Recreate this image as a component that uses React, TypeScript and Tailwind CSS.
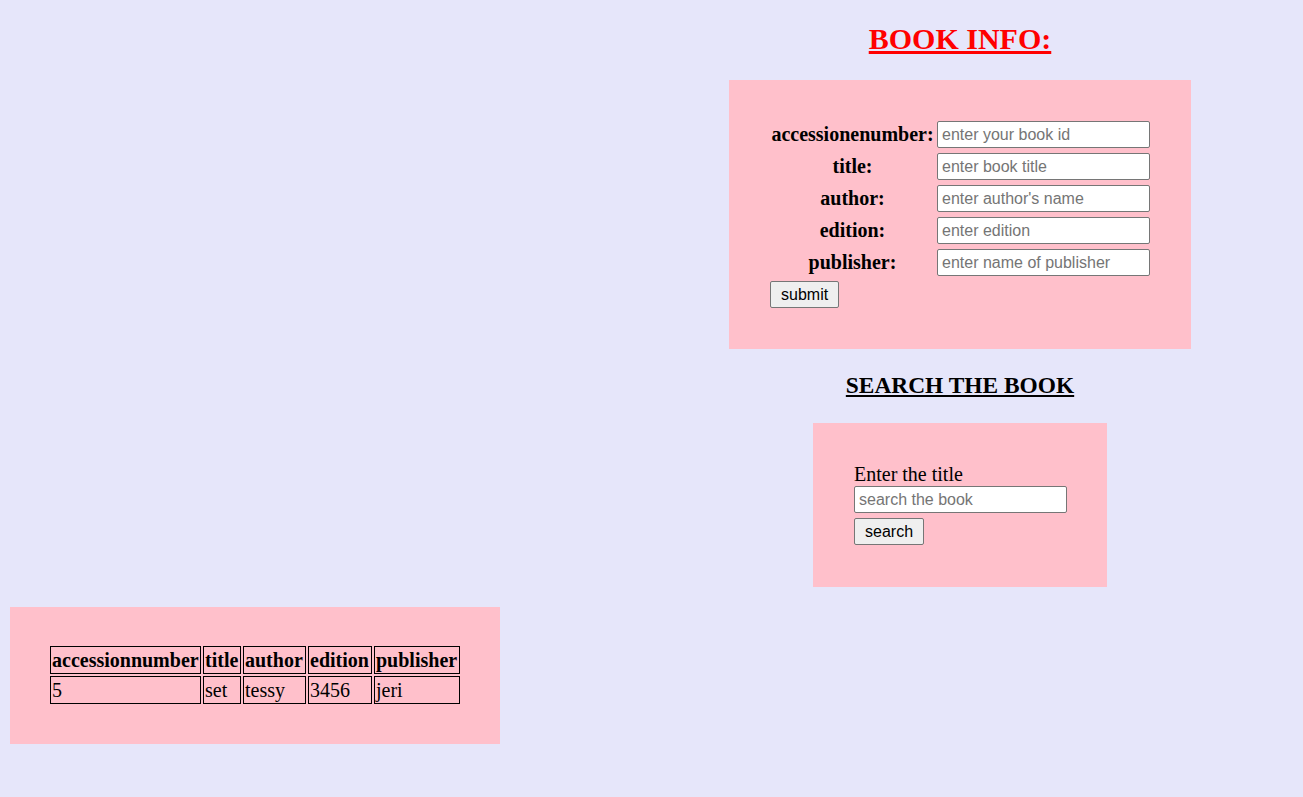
import React from "react";

const serif = { fontFamily: '"Liberation Serif", "Times New Roman", serif' };

const inputCls =
  "h-[27px] w-[213px] bg-white border border-[#767676] rounded-[2px] px-[4px] text-[16px] text-black placeholder:text-[#757575] font-['Liberation_Sans',Arial,sans-serif] outline-none";
const btnCls =
  "h-[27px] bg-[#efefef] border border-[#767676] rounded-[2px] px-[10px] text-[16px] text-black font-['Liberation_Sans',Arial,sans-serif] leading-none";

const fields = [
  ["accessionenumber:", "enter your book id"],
  ["title:", "enter book title"],
  ["author:", "enter author's name"],
  ["edition:", "enter edition"],
  ["publisher:", "enter name of publisher"],
];

const cols: [string, string, string][] = [
  ["accessionnumber", "5", "w-[151px]"],
  ["title", "set", "w-[38px]"],
  ["author", "tessy", "w-[63px]"],
  ["edition", "3456", "w-[64px]"],
  ["publisher", "jeri", "w-[86px]"],
];

export default function App() {
  return (
    <div
      className="min-h-screen w-full bg-[#e6e6fa] text-black text-[20px] font-['Liberation_Serif','Times_New_Roman',serif]"
      style={serif}
    >
      <div className="ml-auto w-[686px] pt-[22px] flex flex-col items-center">
        <h2 className="text-[30px] leading-[34px] font-bold underline text-[#ff0000] mb-[24px]">
          BOOK INFO:
        </h2>
        <div className="bg-[#ffc0cb] w-[462px] pl-[41px] pr-[41px] pt-[41px] pb-[41px]">
          <div className="grid grid-cols-[165px_213px] gap-x-[2px] gap-y-[5px] items-center">
            {fields.map(([label, ph]) => (
              <React.Fragment key={label}>
                <div className="font-bold text-center leading-[23px]">{label}</div>
                <input className={inputCls} placeholder={ph} />
              </React.Fragment>
            ))}
          </div>
          <div className="mt-[5px] flex">
            <button className={btnCls}>submit</button>
          </div>
        </div>
        <h3 className="text-[23.4px] leading-[27px] font-bold underline mt-[23px] mb-[24px]">
          SEARCH THE BOOK
        </h3>
        <div className="bg-[#ffc0cb] w-[294px] pl-[41px] pr-[40px] pt-[40px] pb-[42px] flex flex-col items-start">
          <div className="leading-[23px]">Enter the title</div>
          <input className={inputCls} placeholder="search the book" />
          <button className={btnCls + " mt-[5px]"}>search</button>
        </div>
      </div>
      <div className="pl-[10px] mt-[20px] pb-[53px]">
        <div className="bg-[#ffc0cb] w-[490px] pt-[37px] pb-[38px] px-[38px]">
          <table className="border-separate border-spacing-[2px]">
            <thead>
              <tr>
                {cols.map(([h, , w]) => (
                  <th key={h} className={"border border-black p-[1px] leading-[24px] font-bold text-left " + w}>
                    {h}
                  </th>
                ))}
              </tr>
            </thead>
            <tbody>
              <tr>
                {cols.map(([h, d]) => (
                  <td key={h} className="border border-black p-[1px] leading-[24px] text-left">
                    {d}
                  </td>
                ))}
              </tr>
            </tbody>
          </table>
        </div>
      </div>
    </div>
  );
}
